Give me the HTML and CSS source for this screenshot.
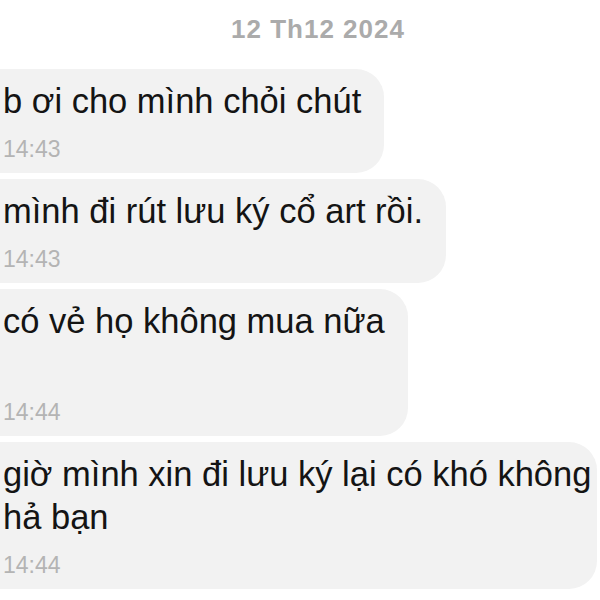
FILE: index.html
```html
<!DOCTYPE html>
<html lang="vi">
<head>
<meta charset="utf-8">
<title>Chat</title>
<link rel="stylesheet" href="styles.css">
</head>
<body>
<main class="chat">
  <div class="date">12 Th12 2024</div>
  <div class="thread">
    <div class="bubble">
      <p class="msg">b ơi cho mình chỏi chút</p>
      <span class="time">14:43</span>
    </div>
    <div class="bubble">
      <p class="msg">mình đi rút lưu ký cổ art rồi.</p>
      <span class="time">14:43</span>
    </div>
    <div class="bubble">
      <p class="msg">có vẻ họ không mua nữa<br><br></p>
      <span class="time">14:44</span>
    </div>
    <div class="bubble bubble--wide">
      <p class="msg">giờ mình xin đi lưu ký lại có khó không hả bạn</p>
      <span class="time">14:44</span>
    </div>
  </div>
</main>
</body>
</html>
```
FILE: styles.css
```css
html, body {
  margin: 0;
  padding: 0;
  background: #ffffff;
}

body {
  width: 600px;
  height: 600px;
  overflow: hidden;
  font-family: "Liberation Sans", Arial, sans-serif;
}

.chat {
  display: flex;
  flex-direction: column;
}

.date {
  padding: 14px 0 0 36px;
  height: 30px;
  line-height: 30px;
  text-align: center;
  font-size: 26px;
  font-weight: bold;
  letter-spacing: 1px;
  color: #ababab;
}

.thread {
  margin-top: 25px;
  display: flex;
  flex-direction: column;
  align-items: flex-start;
  gap: 6px;
}

.bubble {
  margin-left: -30px;
  padding: 11px 23px 11px 33px;
  background: #f2f2f2;
  border-radius: 28px;
  display: flex;
  flex-direction: column;
  box-sizing: border-box;
}

.bubble--wide {
  width: 627px;
  padding-right: 2px;
}

.msg {
  margin: 0;
  font-size: 34.5px;
  line-height: 43px;
  color: #141414;
}

.time {
  margin-top: 13px;
  font-size: 23px;
  line-height: 26px;
  color: #b4b4b4;
}
```
